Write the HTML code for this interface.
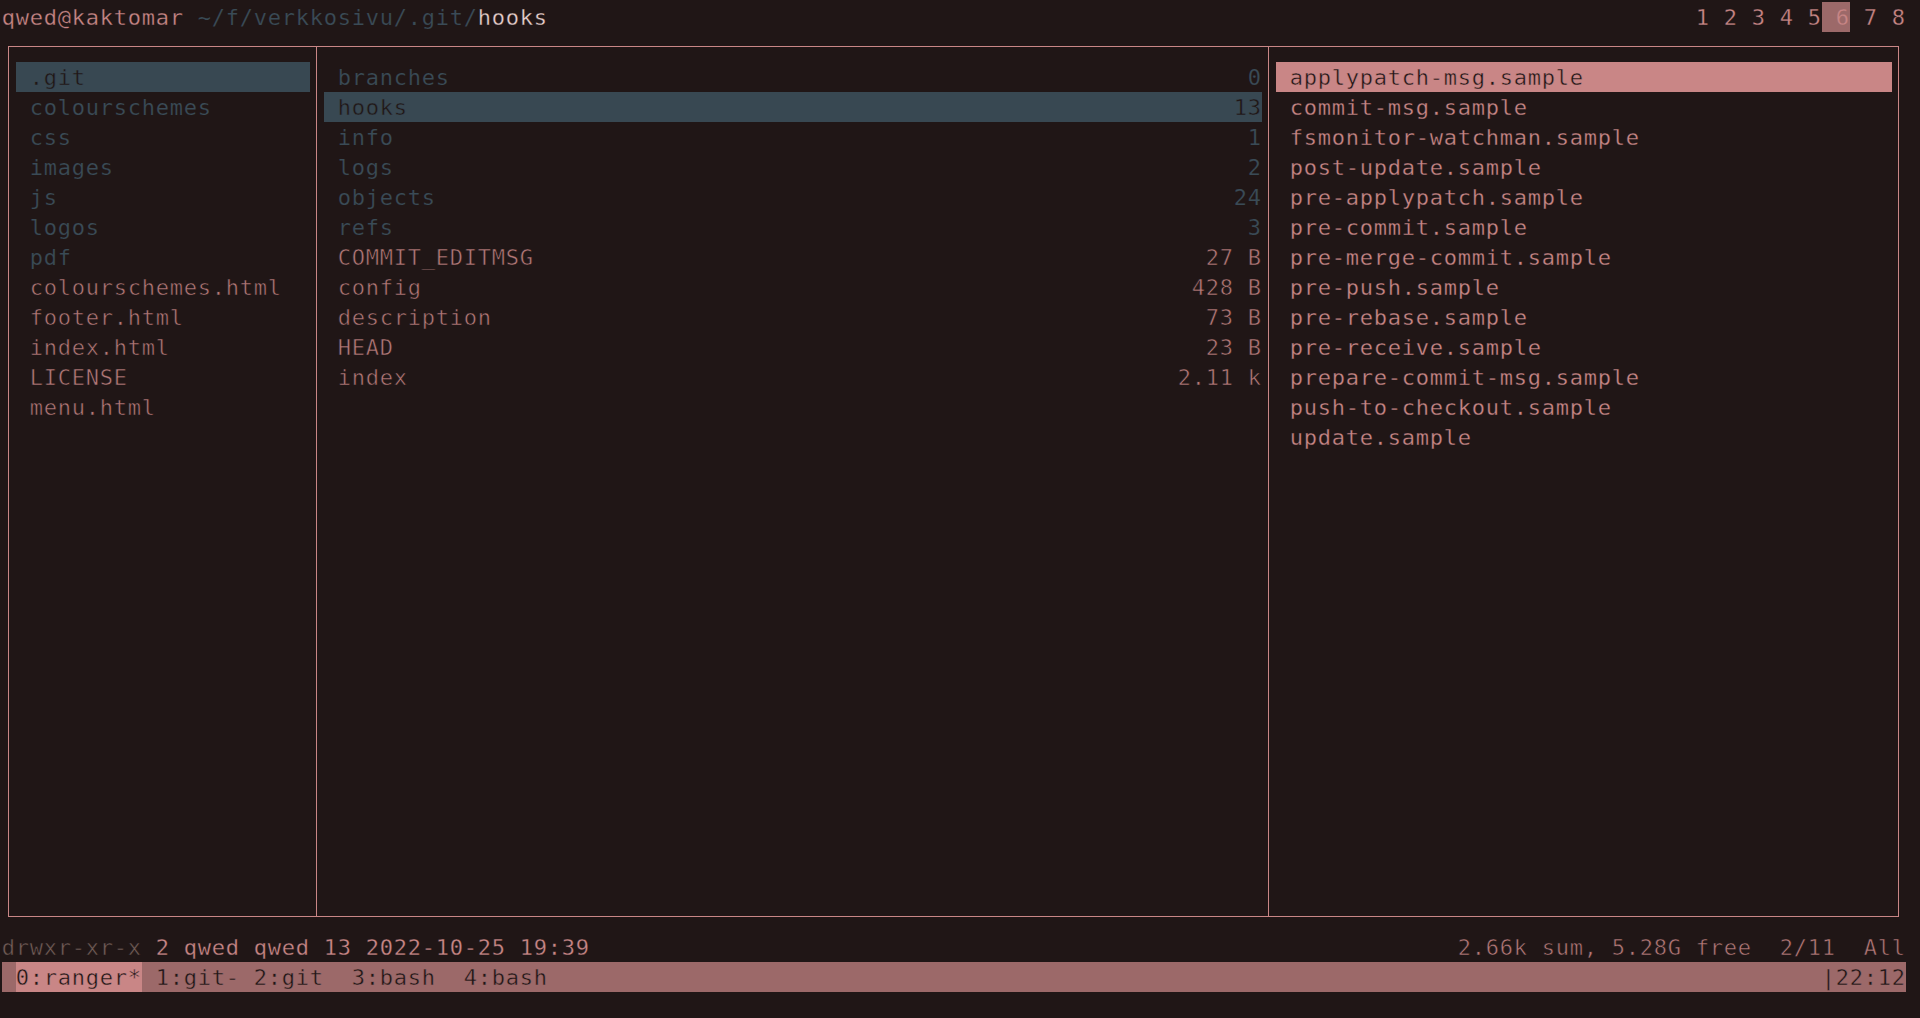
<!DOCTYPE html>
<html><head><meta charset="utf-8"><title>ranger</title>
<style>
html,body{margin:0;padding:0;background:#201616;width:1920px;height:1018px;overflow:hidden}
body{position:relative;font-family:"DejaVu Sans Mono","Liberation Mono",monospace;font-size:22.0px}
.r{position:absolute}
.t{position:absolute;white-space:pre;line-height:30px;height:30px;font-kerning:none;letter-spacing:0.7549px;font-variant-ligatures:none;-webkit-text-stroke:0.3px #201616}
</style></head><body>
<span class="t" style="left:1.80px;top:3px;color:#c98686;">qwed@kaktomar</span>
<span class="t" style="left:197.80px;top:3px;color:#3a4b56;-webkit-text-stroke-width:0.2px;">~/f/verkkosivu/.git/</span>
<span class="t" style="left:477.80px;top:3px;color:#e9d0cd;">hooks</span>
<div class="r" style="left:1822px;top:2px;width:28px;height:30px;background:#9c6969"></div>
<span class="t" style="left:1695.80px;top:3px;color:#c98686;">1 2 3 4 5</span>
<span class="t" style="left:1835.80px;top:3px;color:#c98686;-webkit-text-stroke-color:#9c6969;">6</span>
<span class="t" style="left:1863.80px;top:3px;color:#c98686;">7 8</span>
<div class="r" style="left:8px;top:46px;width:1891px;height:1px;background:#c98686"></div>
<div class="r" style="left:8px;top:916px;width:1891px;height:1px;background:#c98686"></div>
<div class="r" style="left:8px;top:46px;width:1px;height:871px;background:#c98686"></div>
<div class="r" style="left:316px;top:46px;width:1px;height:871px;background:#c98686"></div>
<div class="r" style="left:1268px;top:46px;width:1px;height:871px;background:#c98686"></div>
<div class="r" style="left:1898px;top:46px;width:1px;height:871px;background:#c98686"></div>
<div class="r" style="left:16px;top:62px;width:294px;height:30px;background:#384852"></div>
<span class="t" style="left:29.80px;top:63px;color:#201616;-webkit-text-stroke-color:#384852;-webkit-text-stroke-width:0.45px;">.git</span>
<span class="t" style="left:29.80px;top:93px;color:#3a4b56;-webkit-text-stroke-width:0.2px;">colourschemes</span>
<span class="t" style="left:29.80px;top:123px;color:#3a4b56;-webkit-text-stroke-width:0.2px;">css</span>
<span class="t" style="left:29.80px;top:153px;color:#3a4b56;-webkit-text-stroke-width:0.2px;">images</span>
<span class="t" style="left:29.80px;top:183px;color:#3a4b56;-webkit-text-stroke-width:0.2px;">js</span>
<span class="t" style="left:29.80px;top:213px;color:#3a4b56;-webkit-text-stroke-width:0.2px;">logos</span>
<span class="t" style="left:29.80px;top:243px;color:#3a4b56;-webkit-text-stroke-width:0.2px;">pdf</span>
<span class="t" style="left:29.80px;top:273px;color:#b47878;-webkit-text-stroke-width:0.55px;">colourschemes.html</span>
<span class="t" style="left:29.80px;top:303px;color:#b47878;-webkit-text-stroke-width:0.55px;">footer.html</span>
<span class="t" style="left:29.80px;top:333px;color:#b47878;-webkit-text-stroke-width:0.55px;">index.html</span>
<span class="t" style="left:29.80px;top:363px;color:#b47878;-webkit-text-stroke-width:0.55px;">LICENSE</span>
<span class="t" style="left:29.80px;top:393px;color:#b47878;-webkit-text-stroke-width:0.55px;">menu.html</span>
<span class="t" style="left:337.80px;top:63px;color:#3a4b56;-webkit-text-stroke-width:0.2px;">branches</span>
<span class="t" style="left:1247.80px;top:63px;color:#3a4b56;-webkit-text-stroke-width:0.2px;">0</span>
<div class="r" style="left:324px;top:92px;width:938px;height:30px;background:#384852"></div>
<span class="t" style="left:337.80px;top:93px;color:#201616;-webkit-text-stroke-color:#384852;-webkit-text-stroke-width:0.45px;">hooks</span>
<span class="t" style="left:1233.80px;top:93px;color:#201616;-webkit-text-stroke-color:#384852;-webkit-text-stroke-width:0.45px;">13</span>
<span class="t" style="left:337.80px;top:123px;color:#3a4b56;-webkit-text-stroke-width:0.2px;">info</span>
<span class="t" style="left:1247.80px;top:123px;color:#3a4b56;-webkit-text-stroke-width:0.2px;">1</span>
<span class="t" style="left:337.80px;top:153px;color:#3a4b56;-webkit-text-stroke-width:0.2px;">logs</span>
<span class="t" style="left:1247.80px;top:153px;color:#3a4b56;-webkit-text-stroke-width:0.2px;">2</span>
<span class="t" style="left:337.80px;top:183px;color:#3a4b56;-webkit-text-stroke-width:0.2px;">objects</span>
<span class="t" style="left:1233.80px;top:183px;color:#3a4b56;-webkit-text-stroke-width:0.2px;">24</span>
<span class="t" style="left:337.80px;top:213px;color:#3a4b56;-webkit-text-stroke-width:0.2px;">refs</span>
<span class="t" style="left:1247.80px;top:213px;color:#3a4b56;-webkit-text-stroke-width:0.2px;">3</span>
<span class="t" style="left:337.80px;top:243px;color:#b47878;-webkit-text-stroke-width:0.55px;">COMMIT_EDITMSG</span>
<span class="t" style="left:1205.80px;top:243px;color:#b47878;-webkit-text-stroke-width:0.55px;">27 B</span>
<span class="t" style="left:337.80px;top:273px;color:#b47878;-webkit-text-stroke-width:0.55px;">config</span>
<span class="t" style="left:1191.80px;top:273px;color:#b47878;-webkit-text-stroke-width:0.55px;">428 B</span>
<span class="t" style="left:337.80px;top:303px;color:#b47878;-webkit-text-stroke-width:0.55px;">description</span>
<span class="t" style="left:1205.80px;top:303px;color:#b47878;-webkit-text-stroke-width:0.55px;">73 B</span>
<span class="t" style="left:337.80px;top:333px;color:#b47878;-webkit-text-stroke-width:0.55px;">HEAD</span>
<span class="t" style="left:1205.80px;top:333px;color:#b47878;-webkit-text-stroke-width:0.55px;">23 B</span>
<span class="t" style="left:337.80px;top:363px;color:#b47878;-webkit-text-stroke-width:0.55px;">index</span>
<span class="t" style="left:1177.80px;top:363px;color:#b47878;-webkit-text-stroke-width:0.55px;">2.11 k</span>
<div class="r" style="left:1276px;top:62px;width:616px;height:30px;background:#c98686"></div>
<span class="t" style="left:1289.80px;top:63px;color:#201616;-webkit-text-stroke-color:#c98686;-webkit-text-stroke-width:0.45px;">applypatch-msg.sample</span>
<span class="t" style="left:1289.80px;top:93px;color:#c98686;">commit-msg.sample</span>
<span class="t" style="left:1289.80px;top:123px;color:#c98686;">fsmonitor-watchman.sample</span>
<span class="t" style="left:1289.80px;top:153px;color:#c98686;">post-update.sample</span>
<span class="t" style="left:1289.80px;top:183px;color:#c98686;">pre-applypatch.sample</span>
<span class="t" style="left:1289.80px;top:213px;color:#c98686;">pre-commit.sample</span>
<span class="t" style="left:1289.80px;top:243px;color:#c98686;">pre-merge-commit.sample</span>
<span class="t" style="left:1289.80px;top:273px;color:#c98686;">pre-push.sample</span>
<span class="t" style="left:1289.80px;top:303px;color:#c98686;">pre-rebase.sample</span>
<span class="t" style="left:1289.80px;top:333px;color:#c98686;">pre-receive.sample</span>
<span class="t" style="left:1289.80px;top:363px;color:#c98686;">prepare-commit-msg.sample</span>
<span class="t" style="left:1289.80px;top:393px;color:#c98686;">push-to-checkout.sample</span>
<span class="t" style="left:1289.80px;top:423px;color:#c98686;">update.sample</span>
<span class="t" style="left:1.80px;top:933px;color:#735d58;-webkit-text-stroke-width:0.5px;">drwxr-xr-x</span>
<span class="t" style="left:155.80px;top:933px;color:#c98686;">2 qwed qwed 13 2022-10-25 19:39</span>
<span class="t" style="left:1457.80px;top:933px;color:#b47878;-webkit-text-stroke-width:0.55px;">2.66k sum, 5.28G free  2/11  All</span>
<div class="r" style="left:2px;top:962px;width:1904px;height:30px;background:#9c6969"></div>
<div class="r" style="left:16px;top:962px;width:126px;height:30px;background:#c98686"></div>
<span class="t" style="left:15.80px;top:963px;color:#201616;-webkit-text-stroke-color:#c98686;-webkit-text-stroke-width:0.45px;">0:ranger*</span>
<span class="t" style="left:155.80px;top:963px;color:#201616;-webkit-text-stroke-color:#9c6969;-webkit-text-stroke-width:0.45px;">1:git- 2:git  3:bash  4:bash</span>
<span class="t" style="left:1821.80px;top:963px;color:#201616;-webkit-text-stroke-color:#9c6969;-webkit-text-stroke-width:0.45px;">|22:12</span>
</body></html>
